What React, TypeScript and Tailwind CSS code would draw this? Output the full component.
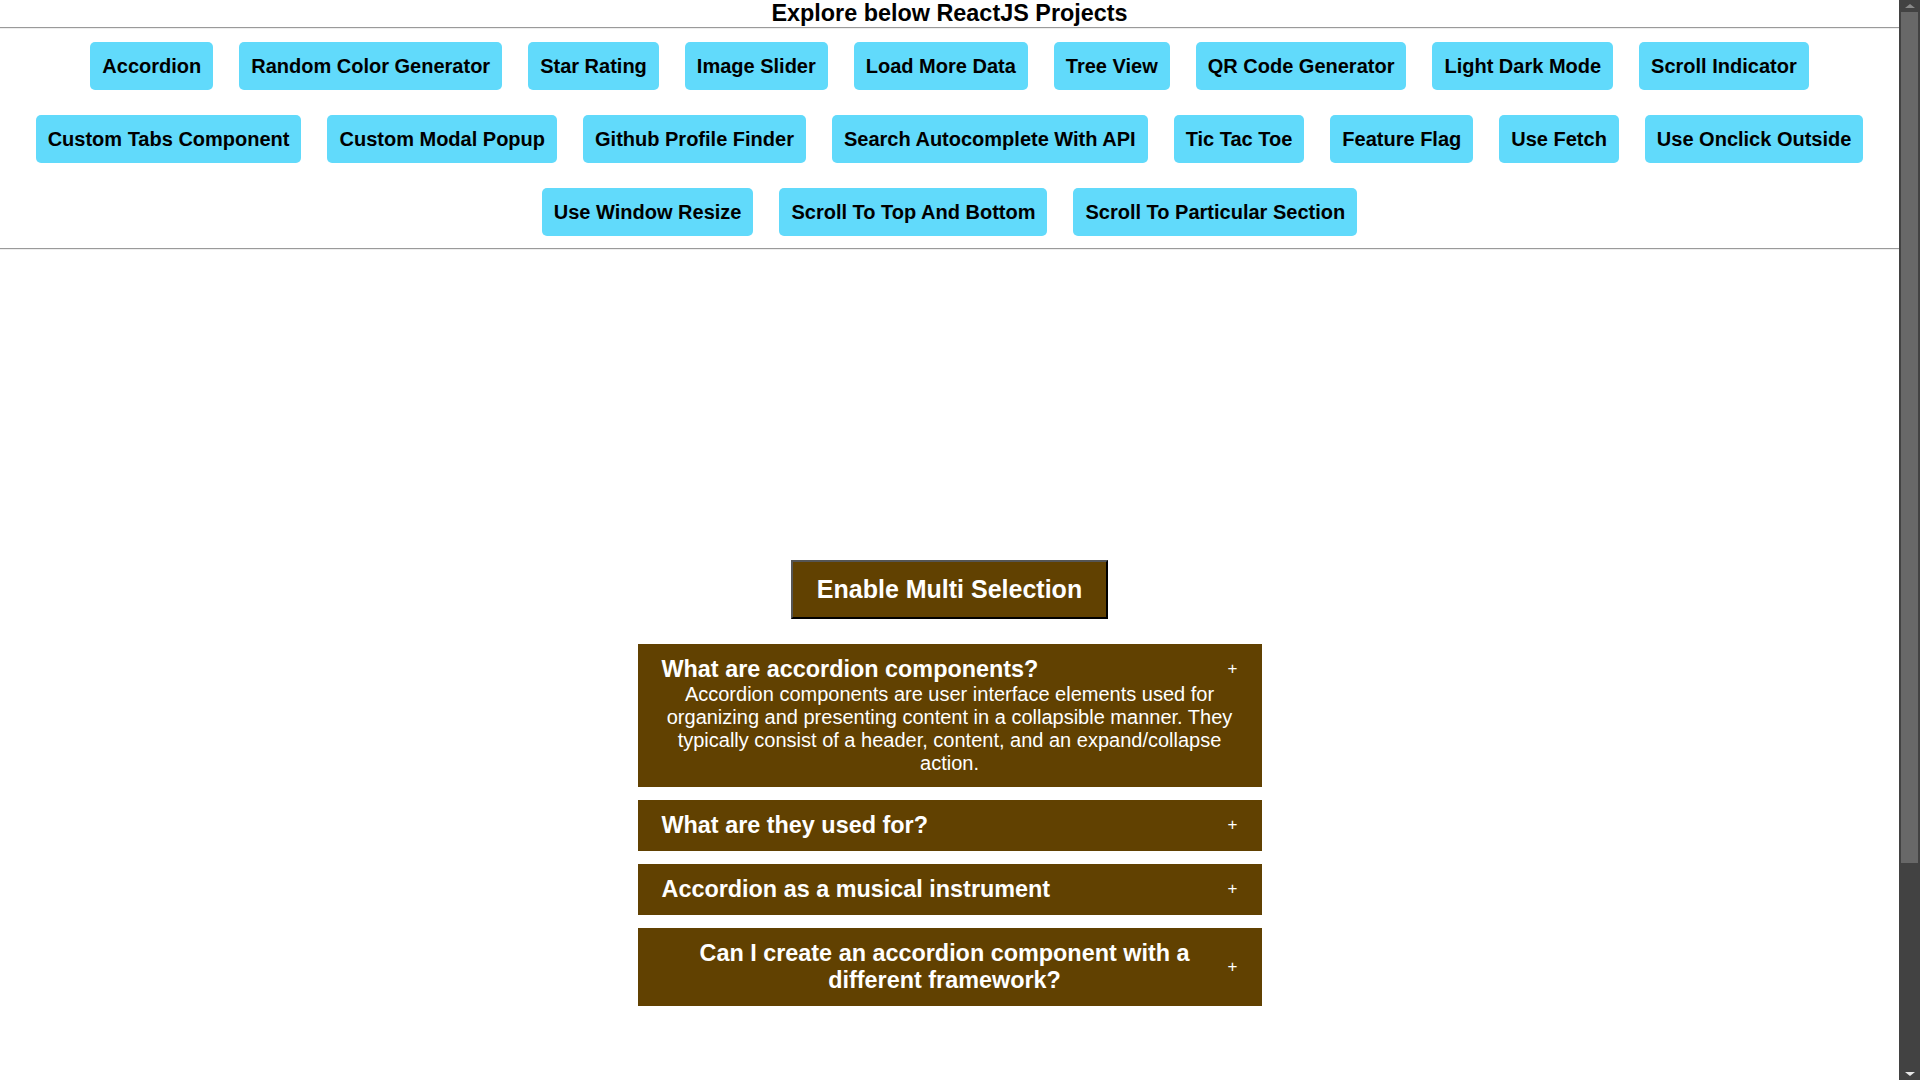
import React, { useState } from "react";

const projects = [
  "Accordion",
  "Random Color Generator",
  "Star Rating",
  "Image Slider",
  "Load More Data",
  "Tree View",
  "QR Code Generator",
  "Light Dark Mode",
  "Scroll Indicator",
  "Custom Tabs Component",
  "Custom Modal Popup",
  "Github Profile Finder",
  "Search Autocomplete With API",
  "Tic Tac Toe",
  "Feature Flag",
  "Use Fetch",
  "Use Onclick Outside",
  "Use Window Resize",
  "Scroll To Top And Bottom",
  "Scroll To Particular Section",
];

const faqs = [
  {
    id: "1",
    question: "What are accordion components?",
    answer:
      "Accordion components are user interface elements used for organizing and presenting content in a collapsible manner. They typically consist of a header, content, and an expand/collapse action.",
  },
  {
    id: "2",
    question: "What are they used for?",
    answer:
      "They are commonly employed in various contexts, including FAQs, product descriptions, navigation menus, settings panels, and data tables.",
  },
  {
    id: "3",
    question: "Accordion as a musical instrument",
    answer:
      "The accordion is a musical instrument with a keyboard and bellows. It produces sound by air passing over reeds when the bellows are expanded or compressed.",
  },
  {
    id: "4",
    question: "Can I create an accordion component with a different framework?",
    answer:
      "Yes of course, it is very possible to create an accordion component with another framework.",
  },
];

const Accordion = () => {
  const [selected, setSelected] = useState<string | null>("1");
  const [multi, setMulti] = useState<boolean>(false);
  const [multiple, setMultiple] = useState<string[]>([]);

  const handleClick = (id: string) => {
    if (multi) {
      setMultiple((prev) =>
        prev.includes(id) ? prev.filter((x) => x !== id) : [...prev, id]
      );
    } else {
      setSelected(selected === id ? null : id);
    }
  };

  return (
    <div className="flex h-screen w-full shrink-0 flex-col items-center justify-center text-center">
      <button
        onClick={() => setMulti(!multi)}
        className="mb-[25px] cursor-pointer border-2 border-t-[#555555] border-l-[#555555] border-r-black border-b-black bg-[#614101] px-6 py-[13px] text-[25px] font-bold leading-[29px] text-white"
      >
        Enable Multi Selection
      </button>
      <div className="w-[624px] pb-[2px]">
        {faqs.map((item) => {
          const open = multi ? multiple.includes(item.id) : selected === item.id;
          return (
            <div key={item.id} className="mb-[13px] bg-[#614101] px-6 py-3 text-white">
              <div
                onClick={() => handleClick(item.id)}
                className="flex cursor-pointer items-center justify-between"
              >
                <h3 className="m-0 text-[23.4px] font-bold leading-[27px]">{item.question}</h3>
                <span className="text-[17px] leading-5">+</span>
              </div>
              {open && <div className="text-[20px] leading-[23px]">{item.answer}</div>}
            </div>
          );
        })}
      </div>
    </div>
  );
};

// window scrollbar, as it shows in the screenshot
const Scrollbar = () => (
  <div className="flex h-screen w-[21px] shrink-0 flex-col items-center bg-[#424242]">
    <div className="flex h-[12px] w-full items-center justify-center">
      <div className="h-0 w-0 border-x-[5px] border-b-[4px] border-x-transparent border-b-[#8a8a8a]" />
    </div>
    <div className="h-[851px] w-[17px] bg-[#686868]" />
    <div className="flex-1" />
    <div className="flex h-[12px] w-full items-center justify-center">
      <div className="h-0 w-0 border-x-[5px] border-t-[4px] border-x-transparent border-t-[#e6e6e6]" />
    </div>
  </div>
);

export default function App() {
  return (
    <div className="flex h-screen w-full overflow-hidden bg-white font-['Liberation_Sans',Arial,sans-serif] text-black">
      <main className="h-screen min-w-0 flex-1 overflow-y-auto [scrollbar-width:none]">
        <h1 className="m-0 text-center text-[23.4px] font-bold leading-[27px]">
          Explore below ReactJS Projects
        </h1>
        <div className="border-t border-b border-t-[#9a9a9a] border-b-[#eeeeee]" />
        <div className="flex flex-wrap justify-center gap-x-[26px] gap-y-[25px] pt-[13px] pb-[12px]">
          {projects.map((name) => (
            <button
              key={name}
              className="cursor-pointer rounded-[5px] bg-[#61dafb] px-3 py-3 text-[20px] font-bold leading-6 text-black"
            >
              {name}
            </button>
          ))}
        </div>
        <div className="border-t border-b border-t-[#9a9a9a] border-b-[#eeeeee]" />
        <Accordion />
      </main>
      <Scrollbar />
    </div>
  );
}
